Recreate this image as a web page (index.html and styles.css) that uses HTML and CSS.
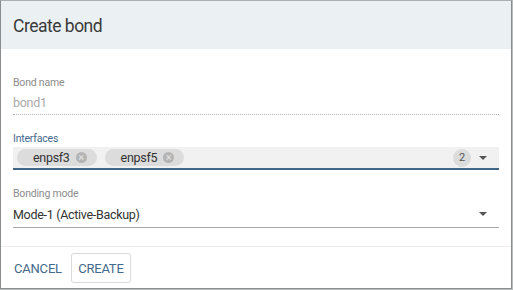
FILE: index.html
```html
<!DOCTYPE html>
<html lang="en">
<head>
    <meta charset="UTF-8">
    <meta name="viewport" content="width=device-width, initial-scale=1.0">
    <title>Create bond</title>
    <link rel="stylesheet" href="styles.css">
</head>
<body>
    <div class="dialog">
        <div class="dialog-header">
            <h1 class="dialog-title">Create bond</h1>
        </div>
        <div class="dialog-body">
            <div class="field">
                <label class="field-label">Bond name</label>
                <div class="field-input field-disabled">bond1</div>
            </div>
            <div class="field">
                <label class="field-label field-label-active">Interfaces</label>
                <div class="field-input field-chips">
                    <span class="chip">enpsf3<span class="chip-remove">&times;</span></span>
                    <span class="chip">enpsf5<span class="chip-remove">&times;</span></span>
                    <span class="spacer"></span>
                    <span class="count">2</span>
                    <span class="caret"></span>
                </div>
            </div>
            <div class="field">
                <label class="field-label">Bonding mode</label>
                <div class="field-input field-select">
                    <span>Mode-1 (Active-Backup)</span>
                    <span class="spacer"></span>
                    <span class="caret"></span>
                </div>
            </div>
        </div>
        <div class="dialog-footer">
            <button class="btn">Cancel</button>
            <button class="btn btn-outline">Create</button>
        </div>
    </div>
</body>
</html>
```

FILE: styles.css
```css
* {
    box-sizing: border-box;
}

body {
    margin: 0;
    padding: 0;
    background-color: #b9bcbd;
    font-family: Roboto, "Liberation Sans", sans-serif;
}

.dialog {
    width: 512px;
    height: 289px;
    background-color: #ffffff;
    border: 1px solid #8a8d8e;
    border-top-color: #a9b0b2;
    display: flex;
    flex-direction: column;
}

.dialog-header {
    height: 48px;
    background-color: #ebf1f2;
    display: flex;
    align-items: center;
    padding: 0 12px;
}

.dialog-title {
    margin: 2px 0 0 0;
    font-size: 17.5px;
    letter-spacing: -0.5px;
    font-weight: 400;
    color: #3a3a3a;
}

.dialog-body {
    padding: 27px 12px 0 12px;
    display: flex;
    flex-direction: column;
    gap: 17px;
    flex: 1;
}

.field {
    display: flex;
    flex-direction: column;
}

.field-label {
    font-size: 10.5px;
    letter-spacing: -0.2px;
    line-height: 14px;
    color: #8c8c8c;
}

.field-label-active {
    color: #44698a;
}

.field-input {
    display: flex;
    align-items: center;
    font-size: 12.5px;
    letter-spacing: -0.3px;
    color: #333333;
    border-bottom: 1px solid #a8a8a8;
}

.field-disabled {
    height: 25px;
    padding-top: 1px;
    color: #aaaaaa;
    border-bottom: 1px dotted #b5b5b5;
}

.field-chips {
    height: 23px;
    margin-top: 1px;
    padding: 0 12px 0 4px;
    background-color: #f1f1f1;
    border-bottom: 2px solid #3d6687;
}

.field-select {
    height: 27px;
    padding-right: 12px;
}

.chip {
    display: flex;
    align-items: center;
    gap: 6px;
    height: 17px;
    padding: 0 10px 0 16px;
    margin-right: 8px;
    border-radius: 9px;
    background-color: #dcdcdc;
    color: #333333;
    font-size: 12.5px;
}

.chip-remove {
    width: 11px;
    height: 11px;
    border-radius: 50%;
    background-color: #b4b4b4;
    color: #e4e4e4;
    font-size: 11px;
    line-height: 11px;
    letter-spacing: 0;
    text-align: center;
}

.spacer {
    flex: 1;
}

.count {
    width: 18px;
    height: 18px;
    border-radius: 50%;
    background-color: #dcdcdc;
    color: #555555;
    font-size: 11px;
    line-height: 18px;
    letter-spacing: 0;
    text-align: center;
    margin-right: 8px;
}

.caret {
    width: 0;
    height: 0;
    border-left: 4px solid transparent;
    border-right: 4px solid transparent;
    border-top: 4px solid #555555;
}

.dialog-footer {
    border-top: 1px solid #ececec;
    height: 42px;
    padding: 6px 12px 5px 6px;
    display: flex;
    align-items: stretch;
    gap: 2px;
}

.btn {
    font-family: Roboto, "Liberation Sans", sans-serif;
    font-size: 13px;
    letter-spacing: -0.2px;
    text-transform: uppercase;
    color: #44698a;
    background: none;
    border: 1px solid transparent;
    border-radius: 3px;
    padding: 0 6px;
    cursor: pointer;
}

.btn-outline {
    border-color: #dadada;
    width: 60px;
}
```
